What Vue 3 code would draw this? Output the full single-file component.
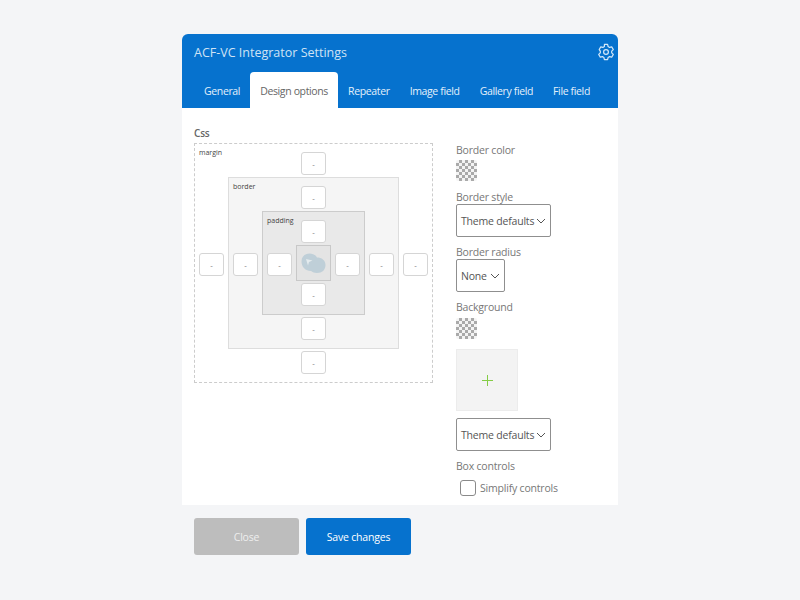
<script setup>
const tabs = ['General', 'Design options', 'Repeater', 'Image field', 'Gallery field', 'File field']
</script>

<template>
  <div class="page">
    <div class="panel">
      <div class="head">
        <div class="title-row">
          <span class="title">ACF-VC Integrator Settings</span>
          <svg class="gear" viewBox="0 0 18 18" width="18" height="18" fill="none" stroke="#d5e8f8" stroke-width="1.2" stroke-linejoin="round">
            <path d="M7.4 1.4h3.2l.5 2.1 1.5.9 2.1-.6 1.6 2.8-1.6 1.500v1.800l1.600 1.500-1.600 2.800-2.100-.6-1.500.9-.5 2.100H7.400l-.5-2.100-1.500-.9-2.100.6-1.600-2.800 1.600-1.500V8.100L2.200 6.600l1.600-2.800 2.100.6 1.500-.9z" />
            <circle cx="9" cy="9" r="2.400" />
          </svg>
        </div>
        <div class="tabs">
          <div v-for="t in tabs" :key="t" class="tab" :class="{ active: t === 'Design options' }">{{ t }}</div>
        </div>
      </div>

      <div class="body">
        <div class="left">
          <div class="css-label">Css</div>
          <div class="layer margin">
            <span class="layer-name">margin</span>
            <div class="cell top"><button class="side">-</button></div>
            <div class="cell l"><button class="side">-</button></div>
            <div class="cell r"><button class="side">-</button></div>
            <div class="cell bottom"><button class="side">-</button></div>
            <div class="layer border mid">
              <span class="layer-name">border</span>
              <div class="cell top"><button class="side">-</button></div>
              <div class="cell l"><button class="side">-</button></div>
              <div class="cell r"><button class="side">-</button></div>
              <div class="cell bottom"><button class="side">-</button></div>
              <div class="layer padding mid">
                <span class="layer-name">padding</span>
                <div class="cell top"><button class="side">-</button></div>
                <div class="cell l"><button class="side">-</button></div>
                <div class="cell r"><button class="side">-</button></div>
                <div class="cell bottom"><button class="side">-</button></div>
                <div class="content mid">
                  <svg viewBox="0 0 25 21" width="25" height="21">
                    <path d="M0.500 8.500C0.500 3.500 4 0.500 8.500 0.500c3.500 0 6 1.500 7.500 4 4.500 0 8.500 2.500 8.500 7.500 0 5-3.500 8-8.500 8-2.500 0-4.500-.7-6-2C4.500 18 0.500 14 0.500 8.500z" fill="#bfcfd8" />
                    <path d="M5 6l6.500 1.500-3.500 1.500-1 3.500z" fill="#e4ebee" />
                  </svg>
                </div>
              </div>
            </div>
          </div>
        </div>

        <div class="right">
          <label class="field-label first">Border color</label>
          <div class="swatch"></div>
          <label class="field-label to-select style">Border style</label>
          <div class="select wide">Theme defaults
            <svg viewBox="0 0 10 6" width="10" height="6" fill="none" stroke="#555" stroke-width="1"><path d="M1 1l4 4 4-4" /></svg>
          </div>
          <label class="field-label to-select">Border radius</label>
          <div class="select narrow">None
            <svg viewBox="0 0 10 6" width="10" height="6" fill="none" stroke="#555" stroke-width="1"><path d="M1 1l4 4 4-4" /></svg>
          </div>
          <label class="field-label bg">Background</label>
          <div class="swatch"></div>
          <div class="image-add">
            <svg viewBox="0 0 11 11" width="11" height="11" fill="none"><path class="plus" d="M5.500 0v11M0 5.500h11" /></svg>
          </div>
          <div class="select wide second">Theme defaults
            <svg viewBox="0 0 10 6" width="10" height="6" fill="none" stroke="#555" stroke-width="1"><path d="M1 1l4 4 4-4" /></svg>
          </div>
          <label class="field-label box">Box controls</label>
          <div class="check-row">
            <span class="check"></span>
            <span>Simplify controls</span>
          </div>
        </div>
      </div>

      <div class="foot">
        <button class="btn close">Close</button>
        <button class="btn save">Save changes</button>
      </div>
    </div>
  </div>
</template>

<style>
html, body { margin: 0; background: #f4f5f7; }
</style>

<style scoped>
.page {
  width: 800px;
  height: 600px;
  box-sizing: border-box;
  padding-top: 34px;
  display: flex;
  justify-content: center;
  background: #f4f5f7;
  font-family: "Open Sans", "Noto Sans", sans-serif;
  font-size: 10.500px;
  letter-spacing: -0.2px;
  color: #777;
}
.panel { width: 436px; }
.head {
  height: 74px;
  background: #0672ce;
  border-radius: 6px 6px 0 0;
  display: flex;
  flex-direction: column;
}
.title-row {
  height: 36px;
  display: flex;
  align-items: center;
  justify-content: space-between;
  padding: 0 3px 0 12px;
}
.title { color: #cfe3f5; font-size: 12.500px; letter-spacing: 0; }
.tabs { display: flex; padding: 2px 0 0 12px; height: 36px; }
.tab {
  padding: 0 10px;
  line-height: 38px;
  color: #e3f0fb;
  letter-spacing: -0.36px;
  white-space: nowrap;
}
.tab.active {
  background: #fff;
  color: #666;
  border-radius: 4px 4px 0 0;
}
.body {
  height: 397px;
  background: #fff;
  box-sizing: border-box;
  padding: 19px 12px 0;
  display: flex;
}
.left { width: 239px; }
.css-label { font-size: 10px; font-weight: 600; color: #666; line-height: 13px; margin-bottom: 3px; }
.layer {
  position: relative;
  box-sizing: border-box;
  display: grid;
  grid-template-columns: 33px 1fr 33px;
  grid-template-rows: 33px 1fr 33px;
}
.margin { width: 239px; height: 240px; border: 1px dashed #ccc; }
.border { border: 1px solid #ddd; background: #f5f5f5; }
.padding { border: 1px solid #ccc; background: #e9e9e9; }
.layer-name {
  position: absolute;
  left: 4px;
  top: 4px;
  font-size: 7px;
  color: #444;
  line-height: 9px;
  letter-spacing: 0;
}
.mid { grid-column: 2; grid-row: 2; }
.cell { display: flex; align-items: center; justify-content: center; }
.top { grid-column: 2; grid-row: 1; align-items: flex-end; padding-bottom: 2px; }
.bottom { grid-column: 2; grid-row: 3; align-items: flex-start; padding-top: 2px; }
.l { grid-column: 1; grid-row: 2; padding-top: 3px; }
.r { grid-column: 3; grid-row: 2; padding-top: 3px; }
.side {
  width: 25px;
  height: 23px;
  padding: 0;
  box-sizing: border-box;
  background: #fff;
  border: 1px solid #d5d5d5;
  border-radius: 3px;
  font-family: inherit;
  font-size: 8px;
  color: #777;
}
.content {
  box-sizing: border-box;
  border: 1px solid #c8c8c8;
  background: #e4e4e4;
  display: flex;
  align-items: center;
  justify-content: center;
}
.right {
  margin-left: 23px;
  display: flex;
  flex-direction: column;
  align-items: flex-start;
}
.field-label { line-height: 14px; margin-top: 8px; margin-bottom: 3px; }
.field-label.first { margin-top: 16px; }
.field-label.to-select { margin-bottom: 0; }
.field-label.style { margin-top: 9px; }
.field-label.bg { margin-bottom: 4px; }
.field-label.box { margin-bottom: 7px; }
.swatch {
  width: 21px;
  height: 21px;
  border-radius: 2px;
  background: repeating-conic-gradient(#aaa 0 25%, #f4f4f4 0 50%) 0 0 / 6px 6px;
}
.select {
  height: 33px;
  box-sizing: border-box;
  border: 1px solid #8f8f8f;
  border-radius: 2px;
  background: #fff;
  display: flex;
  align-items: center;
  justify-content: space-between;
  padding: 0 4px;
  color: #555;
  white-space: nowrap;
}
.wide { width: 95px; }
.narrow { width: 49px; }
.second { margin-top: 7px; }
.image-add {
  width: 62px;
  height: 62px;
  margin-top: 10px;
  box-sizing: border-box;
  border: 1px solid #ececec;
  background: #f3f3f3;
  display: flex;
  align-items: center;
  justify-content: center;
}
.plus { stroke: #84cc45; stroke-width: 1; }
.check-row {
  display: flex;
  align-items: center;
  gap: 4px;
  padding-left: 4px;
  line-height: 16px;
}
.check {
  width: 16px;
  height: 16px;
  box-sizing: border-box;
  border: 1px solid #8a8a8a;
  border-radius: 3px;
  background: #fff;
}
.foot { display: flex; gap: 7px; padding: 13px 12px 0; }
.btn {
  width: 105px;
  height: 37px;
  border: none;
  border-radius: 3px;
  font-family: inherit;
  font-size: 10.500px;
  letter-spacing: -0.2px;
  color: #fff;
}
.close { background: #bdbdbd; color: #eee; }
.save { background: #0672ce; }
</style>
